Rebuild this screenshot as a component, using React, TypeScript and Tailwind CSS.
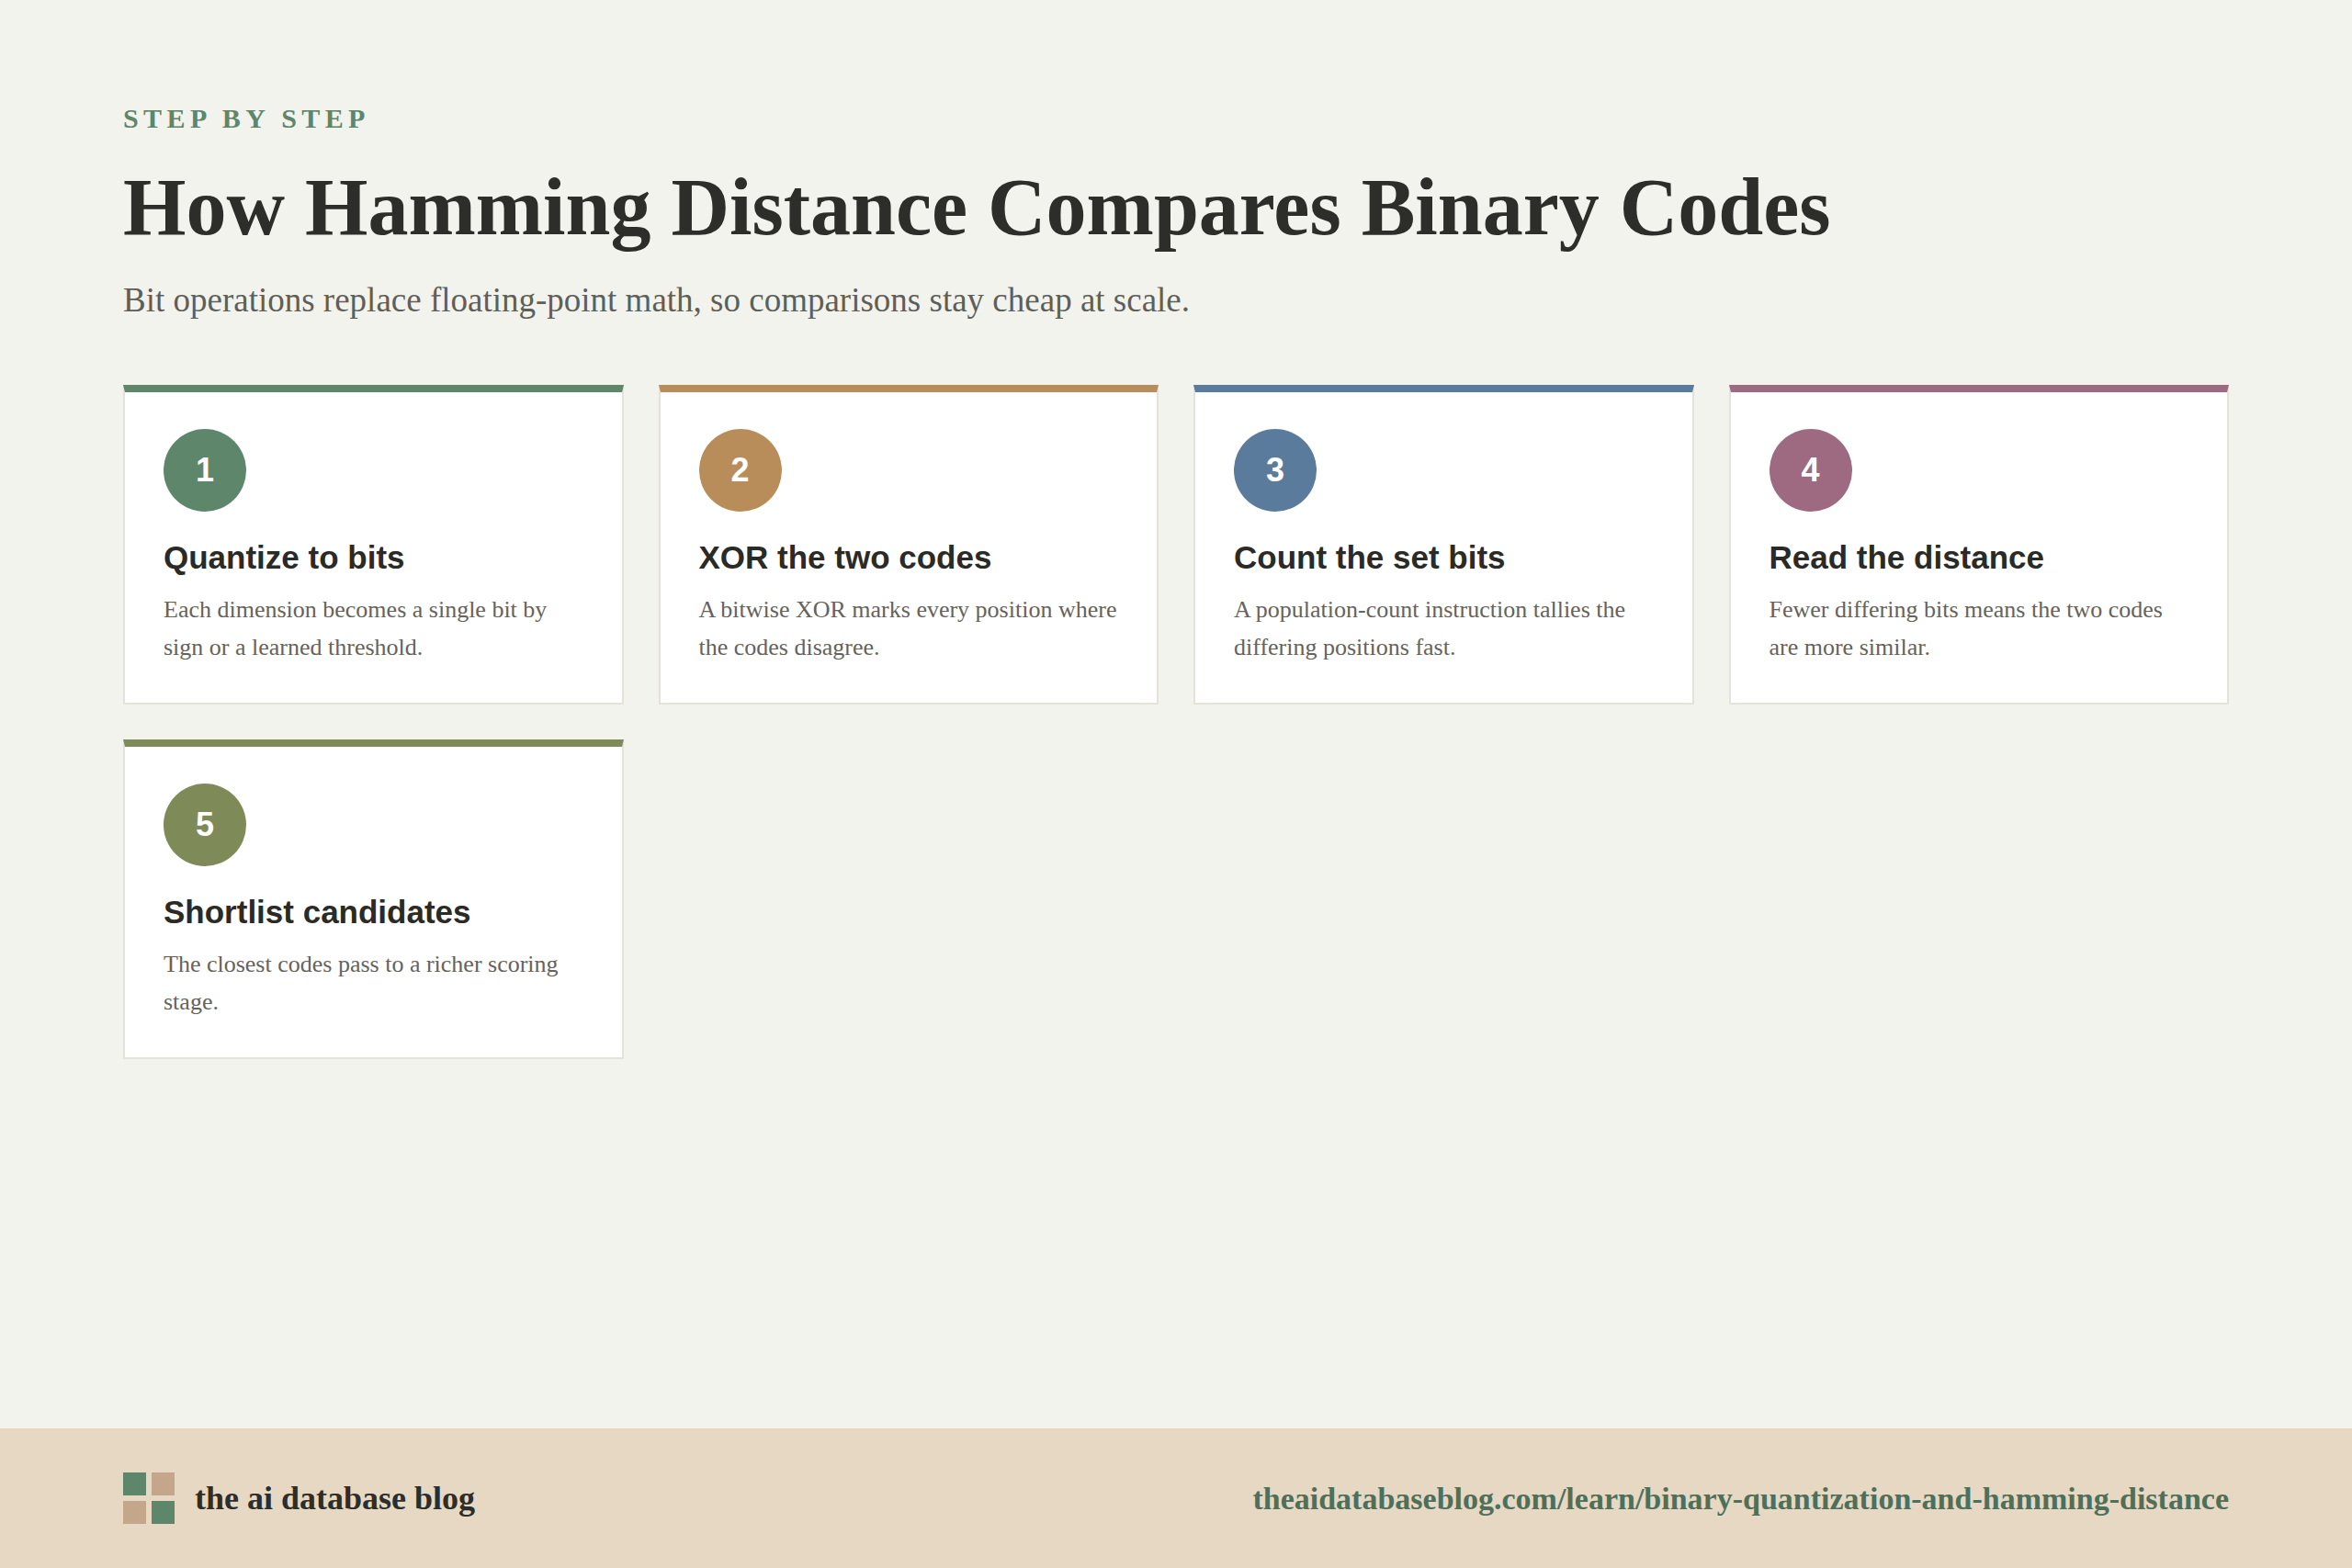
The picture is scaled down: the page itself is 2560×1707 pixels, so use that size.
import React from "react";

const steps = [
  { n: 1, c: "#5d866b", t: "Quantize to bits", d: "Each dimension becomes a single bit by sign or a learned threshold." },
  { n: 2, c: "#b98d5a", t: "XOR the two codes", d: "A bitwise XOR marks every position where the codes disagree." },
  { n: 3, c: "#5a7b9b", t: "Count the set bits", d: "A population-count instruction tallies the differing positions fast." },
  { n: 4, c: "#9d6a82", t: "Read the distance", d: "Fewer differing bits means the two codes are more similar." },
  { n: 5, c: "#7e8a58", t: "Shortlist candidates", d: "The closest codes pass to a richer scoring stage." },
];

export default function App() {
  const serif = { fontFamily: '"Liberation Serif", "Times New Roman", serif' };
  const sans = { fontFamily: '"Liberation Sans", Arial, sans-serif' };
  return (
    <div className="w-[2560px] h-[1707px] bg-[#f3f3ee] flex flex-col" style={serif}>
      <div className="flex-1 px-[134px] pt-[114px]">
        <div className="text-[30px] font-bold tracking-[0.18em] text-[#5d866b] leading-none">STEP BY STEP</div>
        <h1 className="mt-[38px] text-[88px] font-bold text-[#2d2d29] leading-none">How Hamming Distance Compares Binary Codes</h1>
        <p className="mt-[38px] text-[37px] text-[#5f5f5a] leading-none">Bit operations replace floating-point math, so comparisons stay cheap at scale.</p>
        <div className="mt-[74px] grid grid-cols-4 gap-[38px]">
          {steps.map((s) => (
            <div key={s.n} className="bg-white border-2 border-[#e5e2da] h-[348px] px-[42px] pt-[40px]" style={{ borderTopColor: s.c, borderTopWidth: 8 }}>
              <div className="w-[90px] h-[90px] rounded-full flex items-center justify-center text-white text-[36px] font-bold" style={{ ...sans, backgroundColor: s.c }}>{s.n}</div>
              <div className="mt-[28px] text-[35px] font-bold text-[#2a2a26] leading-tight" style={sans}>{s.t}</div>
              <div className="mt-[14px] text-[26px] leading-[41px] text-[#66625c]">{s.d}</div>
            </div>
          ))}
        </div>
      </div>
      <div className="h-[152px] bg-[#e6d8c3] px-[134px] flex items-center justify-between">
        <div className="flex items-center gap-[22px]">
          <div className="grid grid-cols-2 gap-[6px]">
            <div className="w-[25px] h-[25px] bg-[#5d866b]" />
            <div className="w-[25px] h-[25px] bg-[#c4a68a]" />
            <div className="w-[25px] h-[25px] bg-[#c4a68a]" />
            <div className="w-[25px] h-[25px] bg-[#5d866b]" />
          </div>
          <div className="text-[36px] font-bold text-[#2d2d29]">the ai database blog</div>
        </div>
        <div className="text-[34px] font-bold text-[#4e6f5a]">theaidatabaseblog.com/learn/binary-quantization-and-hamming-distance</div>
      </div>
    </div>
  );
}
